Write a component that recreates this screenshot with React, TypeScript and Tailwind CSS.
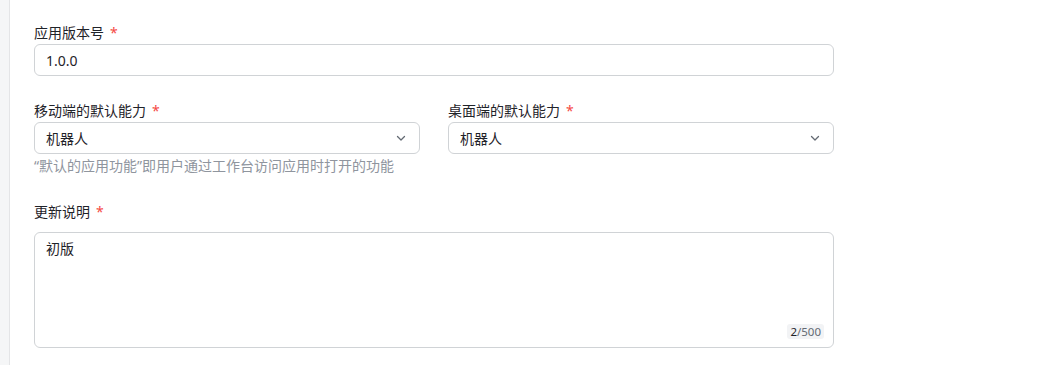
import React from 'react';

const Label: React.FC<{ text: string; className?: string }> = ({ text, className = '' }) => (
  <div className={`text-[14px] leading-[22px] text-[#1f2329] ${className}`}>
    {text}
    <span className="ml-1.5 text-[#f54a45]">*</span>
  </div>
);

const Chevron: React.FC = () => (
  <svg width="12" height="12" viewBox="0 0 12 12" fill="none" className="text-[#646a73]">
    <path d="M2.5 4.5 6 8l3.5-3.5" stroke="currentColor" strokeWidth="1.3" strokeLinecap="round" strokeLinejoin="round" />
  </svg>
);

const SelectBox: React.FC<{ label: string; value: string }> = ({ label, value }) => (
  <div className="flex-1">
    <Label text={label} />
    <div className="h-[32px] rounded-[6px] border border-[#d0d3d6] bg-white pl-[11px] pr-[12px] flex items-center justify-between">
      <span className="text-[14px] text-[#1f2329]">{value}</span>
      <Chevron />
    </div>
  </div>
);

const App: React.FC = () => {
  return (
    <div
      className="flex min-h-[365px] bg-white"
      style={{ fontFamily: '"Noto Sans", "Noto Sans CJK SC", sans-serif' }}
    >
      <div className="w-[10px] shrink-0 bg-[#f5f6f7] border-r border-[#e4e5e7]" />
      <div className="pl-6 pt-[22px] w-[824px]">
        <div className="mb-6">
          <Label text="应用版本号" />
          <div className="h-[32px] rounded-[6px] border border-[#d0d3d6] pl-[11px] flex items-center text-[14px] text-[#1f2329]">
            1.0.0
          </div>
        </div>

        <div className="mb-6">
          <div className="flex gap-7">
            <SelectBox label="移动端的默认能力" value="机器人" />
            <SelectBox label="桌面端的默认能力" value="机器人" />
          </div>
          <div className="mt-px text-[14px] leading-[22px] text-[#8f959e]">
            “默认的应用功能”即用户通过工作台访问应用时打开的功能
          </div>
        </div>

        <div>
          <Label text="更新说明" className="mb-[9px]" />
          <div className="relative h-[116px] rounded-[6px] border border-[#d0d3d6] pl-[11px] pt-[5px] text-[14px] leading-[22px] text-[#1f2329]">
            初版
            <span className="absolute right-[9px] bottom-[8px] rounded-[3px] bg-[#f2f3f5] px-[3px] text-[11.5px] leading-[15px] text-[#646a73]">
              <span className="text-[#1f2329]">2</span>/500
            </span>
          </div>
        </div>
      </div>
    </div>
  );
};

export default App;
